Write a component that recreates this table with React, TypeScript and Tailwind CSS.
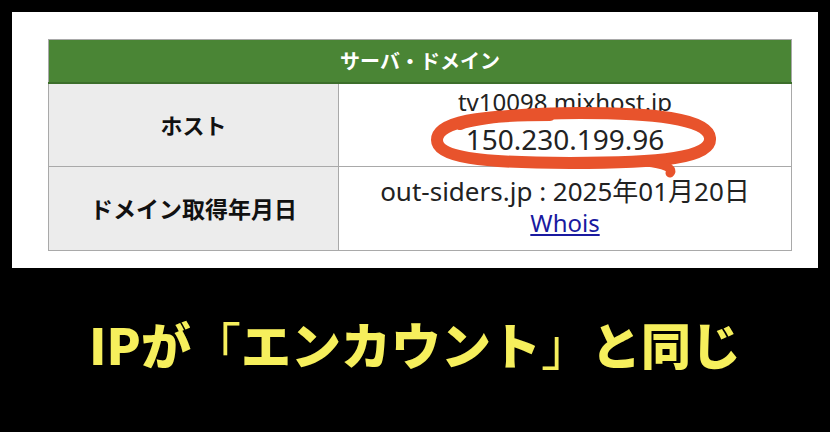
const jp = "font-['Noto_Sans_CJK_JP','Noto_Sans',sans-serif]";
const latin = "font-['Noto_Sans','Noto_Sans_CJK_JP',sans-serif]";

function Circle() {
  return (
    <svg
      className="absolute left-[408px] top-[88px] pointer-events-none"
      width="310"
      height="85"
      viewBox="0 0 310 85"
    >
      <path
        d="M130 15 C 60 15, 17 22, 17 40 C 17 57, 60 63, 150 63 C 240 63, 292 58, 290 38 C 288 18, 230 13, 160 13 C 110 13, 60 17, 40 24"
        fill="none"
        stroke="#e8532c"
        strokeWidth="12"
        strokeLinecap="round"
      />
      <path
        d="M226 62 C 244 64, 254 68, 250 73"
        fill="none"
        stroke="#e8532c"
        strokeWidth="9"
        strokeLinecap="round"
      />
    </svg>
  );
}

export default function App() {
  return (
    <div className={`w-[830px] h-[432px] bg-black flex flex-col ${jp}`}>
      <div className="relative mx-[12px] mt-[12px] h-[256px] bg-white pt-[27px] px-[36px]">
        <table className="w-[744px] border-collapse border border-[#a9a9a9]">
          <thead>
            <tr>
              <th
                colSpan={2}
                className="h-[43px] bg-[#4a8535] text-white text-[20px] font-bold border-b-2 border-[#3c6e2b]"
              >
                サーバ・ドメイン
              </th>
            </tr>
          </thead>
          <tbody>
            <tr>
              <th className="w-[290px] h-[84px] bg-[#ececec] border border-[#a9a9a9] text-[22px] font-bold text-[#111]">
                ホスト
              </th>
              <td className={`h-[84px] border border-[#a9a9a9] text-center text-[#222] pb-[6px] ${latin}`}>
                <div className="text-[24px] leading-[34px]">tv10098.mixhost.jp</div>
                <div className="text-[28px] leading-[40px]">150.230.199.96</div>
              </td>
            </tr>
            <tr>
              <th className="h-[84px] bg-[#ececec] border border-[#a9a9a9] text-[23px] font-bold text-[#111]">
                ドメイン取得年月日
              </th>
              <td className={`h-[84px] border border-[#a9a9a9] text-center text-[#222] leading-[31px] pb-[4px] ${latin}`}>
                <div className="text-[26px]">out-siders.jp : 2025年01月20日</div>
                <div className="text-[24px]">
                  <span className="text-[#1a1aa0] underline">Whois</span>
                </div>
              </td>
            </tr>
          </tbody>
        </table>
        <Circle />
      </div>
      <div className="flex-1 flex items-center justify-center pb-[14px]">
        <div className="text-[#f6ef5c] text-[50px] font-black leading-none">
          IPが<span className="font-normal">「</span>エンカウント<span className="font-normal">」</span>と同じ
        </div>
      </div>
    </div>
  );
}
